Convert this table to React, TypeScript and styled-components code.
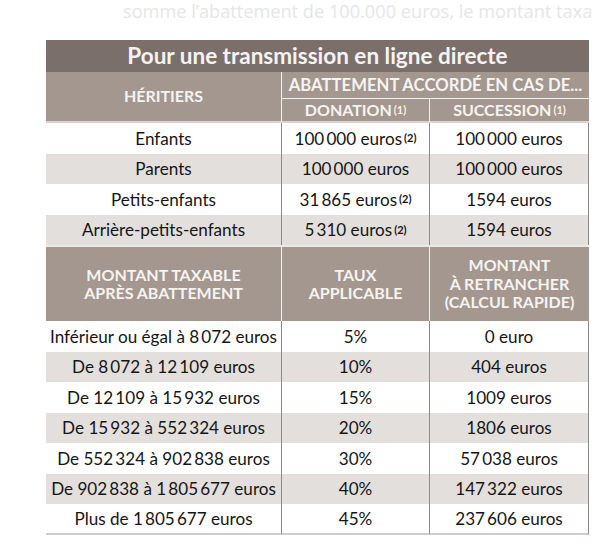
import React from 'react';
import styled, { createGlobalStyle, css } from 'styled-components';

const Global = createGlobalStyle`
  html, body { margin: 0; padding: 0; background: #ffffff; }
  body { font-family: Lato, 'Liberation Sans', sans-serif; }
`;

const Page = styled.div`
  width: 607px;
  height: 549px;
  overflow: hidden;
  background: #ffffff;
`;

const Teaser = styled.div`
  height: 40px;
  box-sizing: border-box;
  padding-left: 123px;
  font-family: 'Open Sans', sans-serif;
  font-size: 18.2px;
  line-height: 22px;
  color: #e6e6e6;
  white-space: nowrap;
`;

const Table = styled.div`
  margin-left: 46px;
  width: 543px;
  display: grid;
  grid-template-columns: 235px 148px 160px;
  grid-template-rows: 32px 26px 25px repeat(4, 30.5px) 76px repeat(7, 30.5px);
`;

const centered = css`
  display: flex;
  align-items: center;
  justify-content: center;
  text-align: center;
  box-sizing: border-box;
`;

const Title = styled.div`
  ${centered};
  grid-column: 1 / -1;
  background: #7b6f6c;
  color: #f7f3f1;
  font-weight: 700;
  font-size: 22.5px;
  padding-bottom: 2px;
`;

const HeadCell = styled.div<{
  $span?: string;
  $rows?: string;
  $divider?: boolean;
  $top?: boolean;
  $bottom?: boolean;
  $upper?: boolean;
  $size?: number;
}>`
  ${centered};
  background: #a3978f;
  color: #f7f3f0;
  font-weight: 700;
  font-size: ${(p) => p.$size || 16}px;
  line-height: 18.5px;
  text-transform: uppercase;
  white-space: nowrap;
  grid-column: ${(p) => p.$span || 'auto'};
  grid-row: ${(p) => p.$rows || 'auto'};
  border-left: ${(p) => (p.$divider ? '1px solid #f4f0ee' : 'none')};
  border-top: ${(p) => (p.$top ? '1px solid #f4f0ee' : p.$upper ? '2px solid #ece8e6' : 'none')};
  border-bottom: ${(p) => (p.$bottom ? '2px solid #d8d4d2' : 'none')};
`;

const DataCell = styled.div<{ $shade: boolean; $col: number; $last?: boolean }>`
  ${centered};
  background: ${(p) => (p.$shade ? '#e3dfdd' : '#ffffff')};
  color: #161515;
  font-size: 17.1px;
  white-space: nowrap;
  border-left: ${(p) => (p.$col > 0 ? '1px solid #8c8886' : 'none')};
  border-right: ${(p) => (p.$col === 2 ? '1px solid #8c8886' : 'none')};
  border-bottom: ${(p) => (p.$last ? '2px solid #cfcccb' : 'none')};
`;

const Sup = styled.sup`
  font-size: 11px;
  font-weight: 700;
  vertical-align: 5px;
  line-height: 0;
  margin-left: 2px;
`;

const heirs: [string, string, boolean, string][] = [
  ['Enfants', '100\u2009000 euros', true, '100\u2009000 euros'],
  ['Parents', '100\u2009000 euros', false, '100\u2009000 euros'],
  ['Petits-enfants', '31\u2009865 euros', true, '1594 euros'],
  ['Arrière-petits-enfants', '5\u2009310 euros', true, '1594 euros'],
];

const brackets: [string, string, string][] = [
  ['Inférieur ou égal à 8\u2009072 euros', '5%', '0 euro'],
  ['De 8\u2009072 à 12\u2009109 euros', '10%', '404 euros'],
  ['De 12\u2009109 à 15\u2009932 euros', '15%', '1009 euros'],
  ['De 15\u2009932 à 552\u2009324 euros', '20%', '1806 euros'],
  ['De 552\u2009324 à 902\u2009838 euros', '30%', '57\u2009038 euros'],
  ['De 902\u2009838 à 1\u2009805\u2009677 euros', '40%', '147\u2009322 euros'],
  ['Plus de 1\u2009805\u2009677 euros', '45%', '237\u2009606 euros'],
];

export default function App() {
  return (
    <Page>
      <Global />
      <Teaser>somme l’abattement de 100.000 euros, le montant taxa</Teaser>
      <Table>
        <Title>Pour une transmission en ligne directe</Title>
        <HeadCell $rows="2 / 4" $bottom>Héritiers</HeadCell>
        <HeadCell $span="2 / 4" $divider $size={16.7}>Abattement accordé en cas de...</HeadCell>
        <HeadCell $divider $top $bottom>
          Donation<Sup>(1)</Sup>
        </HeadCell>
        <HeadCell $divider $top $bottom>
          Succession<Sup>(1)</Sup>
        </HeadCell>
        {heirs.map(([who, don, note, succ], i) => (
          <React.Fragment key={who}>
            <DataCell $shade={i % 2 === 1} $col={0}>{who}</DataCell>
            <DataCell $shade={i % 2 === 1} $col={1}>
              {don}
              {note && <Sup>(2)</Sup>}
            </DataCell>
            <DataCell $shade={i % 2 === 1} $col={2}>{succ}</DataCell>
          </React.Fragment>
        ))}
        <HeadCell $upper>
          Montant taxable
          <br />
          après abattement
        </HeadCell>
        <HeadCell $upper $divider>
          Taux
          <br />
          applicable
        </HeadCell>
        <HeadCell $upper $divider>
          Montant
          <br />
          à retrancher
          <br />
          (calcul rapide)
        </HeadCell>
        {brackets.map(([range, rate, minus], i) => (
          <React.Fragment key={range}>
            <DataCell $shade={i % 2 === 1} $col={0} $last={i === brackets.length - 1}>{range}</DataCell>
            <DataCell $shade={i % 2 === 1} $col={1} $last={i === brackets.length - 1}>{rate}</DataCell>
            <DataCell $shade={i % 2 === 1} $col={2} $last={i === brackets.length - 1}>{minus}</DataCell>
          </React.Fragment>
        ))}
      </Table>
    </Page>
  );
}
